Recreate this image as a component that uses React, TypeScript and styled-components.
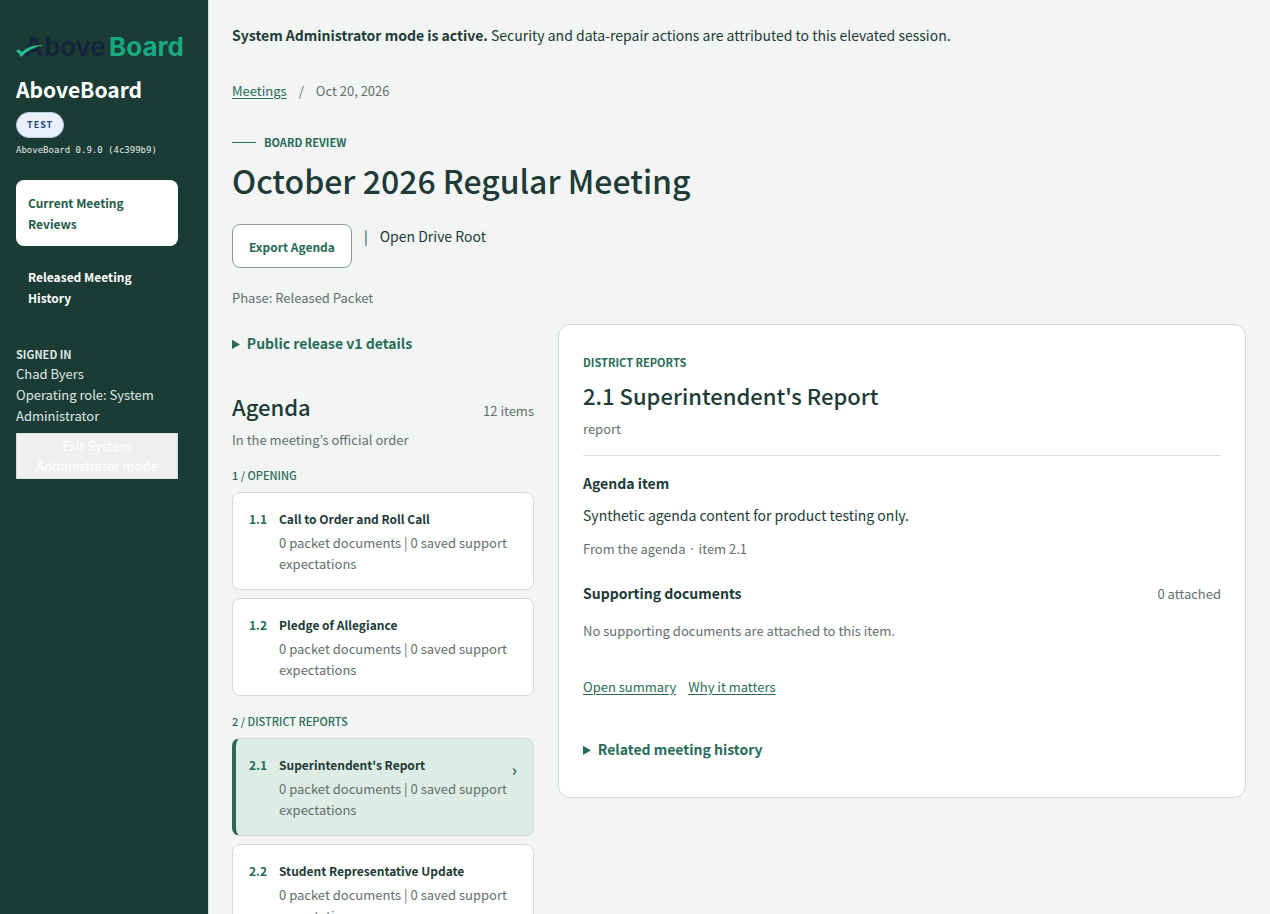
import React from "react";
import styled, { createGlobalStyle, css } from "styled-components";

const GlobalStyle = createGlobalStyle`
  * { box-sizing: border-box; }
  body {
    margin: 0;
    background: #f2f5f4;
    color: #203a37;
    font-family: "Noto Sans CJK KR", "Noto Sans", sans-serif;
    font-size: 14px;
    line-height: 24px;
  }
  h1, h2, h3, p, ul { margin: 0; padding: 0; }
  ul { list-style: none; }
  button { font-family: inherit; }
`;

const Shell = styled.div`
  display: grid;
  grid-template-columns: 208px minmax(0, 1fr);
  min-height: 100vh;
`;

const Sidebar = styled.aside`
  background: #1a3c34;
  color: #fff;
  padding: 32px 30px 24px 16px;
`;

const Logo = styled.svg`
  display: block;
  width: 168px;
  height: 28px;
  overflow: visible;
`;

const Brand = styled.p`
  margin-top: 14px;
  font-size: 21px;
  font-weight: 700;
  line-height: 30px;
`;

const EnvBadge = styled.span`
  display: inline-block;
  margin-top: 8px;
  padding: 0 10px;
  border: 1px solid #b9cdea;
  border-radius: 13px;
  background: #e9f0fb;
  color: #28477f;
  font-size: 9px;
  font-weight: 700;
  line-height: 24px;
  letter-spacing: 1px;
`;

const Version = styled.p`
  margin-top: 5px;
  color: #e3ebe8;
  font-family: "DejaVu Sans Mono", monospace;
  font-size: 9px;
  line-height: 14px;
  white-space: nowrap;
`;

const Nav = styled.nav`
  display: grid;
  gap: 8px;
  margin-top: 23px;
`;

const NavLink = styled.a<{ $active?: boolean }>`
  padding: 12px;
  border-radius: 8px;
  background: ${(p) => (p.$active ? "#fff" : "transparent")};
  color: ${(p) => (p.$active ? "#1f5b4a" : "#fff")};
  font-size: 12px;
  font-weight: 700;
  line-height: 21px;
  text-decoration: none;
`;

const Account = styled.section`
  margin-top: 25px;
  color: #dfe8e5;
  font-size: 13px;
  line-height: 21px;
`;

const AccountLabel = styled.h2`
  font-size: 11px;
  font-weight: 700;
  line-height: 18px;
`;

const ExitButton = styled.button`
  width: 100%;
  margin-top: 7px;
  padding: 2px 6px;
  border: 1px solid #d8d8d8;
  border-radius: 0;
  background: #efefef;
  color: #fff;
  font-size: 13px;
  line-height: 20px;
`;

const Main = styled.main`
  min-width: 0;
  padding: 23px 24px 24px 23px;
  border-left: 1px solid #d3dcd9;
`;

const Breadcrumb = styled.nav`
  display: flex;
  gap: 12px;
  margin-top: 34px;
  color: #61706d;
  font-size: 13px;
  line-height: 20px;
`;

const TextLink = styled.a`
  color: #276b58;
  font-size: 13px;
  line-height: 20px;
  text-underline-offset: 2px;
`;

const Eyebrow = styled.p<{ $rule?: boolean }>`
  display: flex;
  align-items: center;
  gap: 8px;
  color: #276b58;
  font-size: 11px;
  font-weight: 700;
  line-height: 18px;
  text-transform: uppercase;
  ${(p) =>
    p.$rule &&
    css`
      margin-top: 32px;
      &::before {
        content: "";
        width: 24px;
        height: 1px;
        background: #276b58;
      }
    `}
`;

const Title = styled.h1`
  margin-top: 7px;
  font-size: 32px;
  font-weight: 500;
  line-height: 44px;
`;

const Actions = styled.div`
  display: flex;
  align-items: flex-start;
  gap: 12px;
  margin-top: 22px;
`;

const ExportButton = styled.button`
  height: 44px;
  padding: 0 16px;
  border: 1px solid #8b9a97;
  border-radius: 8px;
  background: #fff;
  color: #276b58;
  font-size: 12px;
  font-weight: 700;
`;

const Muted = styled.p`
  color: #61706d;
  font-size: 13px;
  line-height: 20px;
`;

const Phase = styled(Muted)`
  margin-top: 20px;
`;

const Columns = styled.div`
  display: grid;
  grid-template-columns: 302px minmax(0, 1fr);
  align-items: start;
  gap: 24px;
  margin-top: 16px;
`;

const Disclosure = styled.details`
  color: #276b58;
  font-weight: 700;
  summary { cursor: pointer; }
`;

const AgendaColumn = styled.section`
  padding-top: 7px;
`;

const SpreadRow = styled.div`
  display: flex;
  align-items: baseline;
  justify-content: space-between;
`;

const AgendaHead = styled(SpreadRow)`
  margin-top: 35px;
  margin-bottom: 8px;
`;

const Heading = styled.h2`
  font-size: 22px;
  font-weight: 500;
  line-height: 32px;
`;

const GroupTitle = styled.h3`
  margin-top: 16px;
  color: #276b58;
  font-size: 11px;
  font-weight: 500;
  line-height: 18px;
  text-transform: uppercase;
`;

const ItemList = styled.ul`
  display: grid;
  gap: 8px;
  margin-top: 8px;
`;

const ItemLink = styled.a<{ $current?: boolean }>`
  display: grid;
  grid-template-columns: 30px minmax(0, 1fr) auto;
  padding: 16px 16px 15px;
  border: 1px solid #d3dcd9;
  border-radius: 8px;
  background: #fff;
  color: inherit;
  font-size: 12px;
  text-decoration: none;
  ${(p) =>
    p.$current &&
    css`
      padding-left: 13px;
      border-left: 4px solid #276b58;
      background: #ddece4;
    `}
`;

const ItemNumber = styled.span`
  color: #276b58;
  font-weight: 700;
  line-height: 20px;
`;

const ItemName = styled.p`
  font-weight: 700;
  line-height: 20px;
`;

const ItemMeta = styled(Muted)`
  margin-top: 3px;
  line-height: 21px;
`;

const Chevron = styled.span`
  color: #276b58;
  font-size: 16px;
  font-weight: 700;
  line-height: 28px;
`;

const Detail = styled.article`
  padding: 28px 24px 36px;
  border: 1px solid #cfdad7;
  border-radius: 12px;
  background: #fff;
`;

const DetailHead = styled.header`
  padding-bottom: 16px;
  border-bottom: 1px solid #d8e0de;
`;

const DetailTitle = styled(Heading)`
  margin: 8px 0;
`;

const SubHeading = styled.h3`
  font-size: 14px;
  font-weight: 700;
  line-height: 24px;
`;

const ItemText = styled.section`
  margin-top: 15px;
  p { margin-top: 8px; }
  p:last-child { margin-top: 12px; }
`;

const Documents = styled.section`
  display: grid;
  gap: 16px;
  margin-top: 22px;
`;

const LinkRow = styled.div`
  display: flex;
  gap: 12px;
  margin: 36px 0 40px;
`;

const META = "0 packet documents | 0 saved support expectations";

const groups = [
  {
    title: "1 / Opening",
    items: [
      { no: "1.1", name: "Call to Order and Roll Call" },
      { no: "1.2", name: "Pledge of Allegiance" },
    ],
  },
  {
    title: "2 / District Reports",
    items: [
      { no: "2.1", name: "Superintendent's Report", current: true },
      { no: "2.2", name: "Student Representative Update" },
    ],
  },
];

function BrandLogo() {
  return (
    <Logo viewBox="0 0 168 28" role="img" aria-label="AboveBoard">
      <g fontFamily="Inter, sans-serif" fontSize="26">
        <text x="8" y="24" fill="#15233f" fontWeight="700">A</text>
        <text x="28" y="24" fill="#15233f" fontWeight="600">bove</text>
        <text x="93" y="24" fill="#16a982" fontWeight="700">Board</text>
      </g>
      <path d="M0 19 Q3 16 6 20 Q14 12 28 13 Q15 15 5 25 Q3 21 0 19 Z" fill="#22c08c" />
    </Logo>
  );
}

export default function App() {
  return (
    <>
      <GlobalStyle />
      <Shell>
        <Sidebar>
          <BrandLogo />
          <Brand>AboveBoard</Brand>
          <EnvBadge>TEST</EnvBadge>
          <Version>AboveBoard 0.9.0 (4c399b9)</Version>
          <Nav aria-label="Primary">
            <NavLink href="#reviews" $active>Current Meeting Reviews</NavLink>
            <NavLink href="#history">Released Meeting History</NavLink>
          </Nav>
          <Account>
            <AccountLabel>SIGNED IN</AccountLabel>
            <p>Chad Byers</p>
            <p>Operating role: System Administrator</p>
            <ExitButton type="button">Exit System Administrator mode</ExitButton>
          </Account>
        </Sidebar>
        <Main>
          <p>
            <strong>System Administrator mode is active.</strong> Security and data-repair actions are
            attributed to this elevated session.
          </p>
          <Breadcrumb aria-label="Breadcrumb">
            <TextLink href="#meetings">Meetings</TextLink>
            <span>/</span>
            <span>Oct 20, 2026</span>
          </Breadcrumb>
          <Eyebrow $rule>Board review</Eyebrow>
          <Title>October 2026 Regular Meeting</Title>
          <Actions>
            <ExportButton type="button">Export Agenda</ExportButton>
            <span>|</span>
            <span>Open Drive Root</span>
          </Actions>
          <Phase>Phase: Released Packet</Phase>
          <Columns>
            <AgendaColumn>
              <Disclosure>
                <summary>Public release v1 details</summary>
              </Disclosure>
              <AgendaHead>
                <Heading>Agenda</Heading>
                <Muted>12 items</Muted>
              </AgendaHead>
              <Muted>In the meeting’s official order</Muted>
              {groups.map((group) => (
                <React.Fragment key={group.title}>
                  <GroupTitle>{group.title}</GroupTitle>
                  <ItemList>
                    {group.items.map((item) => (
                      <li key={item.no}>
                        <ItemLink href={`#item-${item.no}`} $current={item.current}>
                          <ItemNumber>{item.no}</ItemNumber>
                          <div>
                            <ItemName>{item.name}</ItemName>
                            <ItemMeta>{META}</ItemMeta>
                          </div>
                          {item.current && <Chevron>›</Chevron>}
                        </ItemLink>
                      </li>
                    ))}
                  </ItemList>
                </React.Fragment>
              ))}
            </AgendaColumn>
            <Detail>
              <DetailHead>
                <Eyebrow>District Reports</Eyebrow>
                <DetailTitle>2.1 Superintendent's Report</DetailTitle>
                <Muted>report</Muted>
              </DetailHead>
              <ItemText>
                <SubHeading>Agenda item</SubHeading>
                <p>Synthetic agenda content for product testing only.</p>
                <Muted>From the agenda · item 2.1</Muted>
              </ItemText>
              <Documents>
                <SpreadRow>
                  <SubHeading>Supporting documents</SubHeading>
                  <Muted>0 attached</Muted>
                </SpreadRow>
                <Muted>No supporting documents are attached to this item.</Muted>
              </Documents>
              <LinkRow>
                <TextLink href="#summary">Open summary</TextLink>
                <TextLink href="#why">Why it matters</TextLink>
              </LinkRow>
              <Disclosure>
                <summary>Related meeting history</summary>
              </Disclosure>
            </Detail>
          </Columns>
        </Main>
      </Shell>
    </>
  );
}
